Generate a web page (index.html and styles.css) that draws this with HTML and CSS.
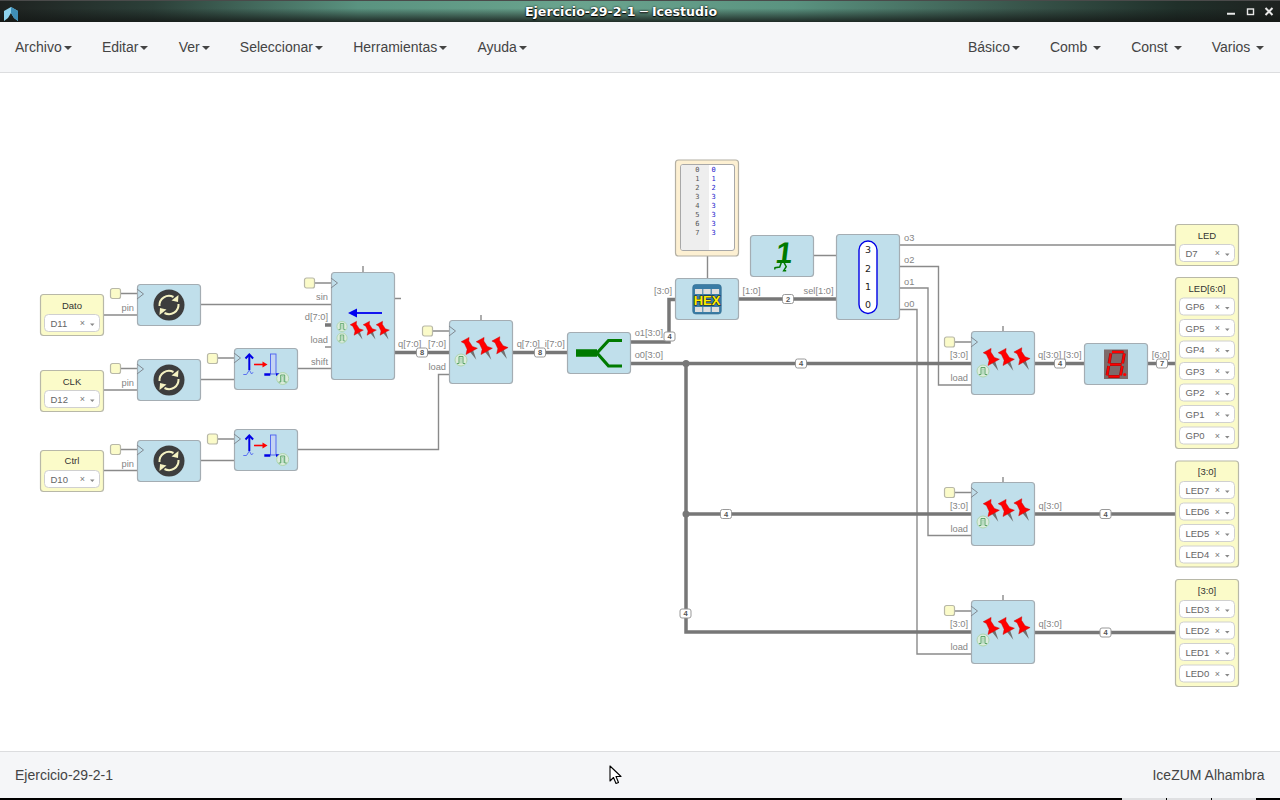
FILE: index.html
```html
<!DOCTYPE html>
<html lang="es">
<head>
<meta charset="utf-8">
<title>Ejercicio-29-2-1 — Icestudio</title>
<link rel="stylesheet" href="styles.css">
</head>
<body>
<div class="app">
  <header class="titlebar">
    <svg class="logo" width="16" height="15" viewBox="0 0 16 15"><path class="logo-a" d="M1 4 8 0l7 4v10l-4-3-3-5-3 5-4 3z"/><path class="logo-b" d="M8 0l7 4v10l-4-3-3-5z"/></svg>
    <div class="title">Ejercicio-29-2-1 ─ Icestudio</div>
    <svg class="winctl" width="48" height="14" viewBox="0 0 48 14"><path class="ctl" d="M1 8.750h8"/><rect class="ctl-thin" x="21.500" y="4" width="6" height="5.500"/><path class="ctl" d="M39.500 3l7 7M46.500 3l-7 7"/></svg>
  </header>
  <nav class="navbar">
    <ul class="menu">
      <li>Archivo<span class="caret"></span></li>
      <li>Editar<span class="caret"></span></li>
      <li>Ver<span class="caret"></span></li>
      <li>Seleccionar<span class="caret"></span></li>
      <li>Herramientas<span class="caret"></span></li>
      <li>Ayuda<span class="caret"></span></li>
    </ul>
    <ul class="menu menu-right">
      <li>Básico<span class="caret"></span></li>
      <li>Comb <span class="caret"></span></li>
      <li>Const <span class="caret"></span></li>
      <li>Varios <span class="caret"></span></li>
    </ul>
  </nav>
  <main class="canvas">
    <svg class="diagram" width="1280" height="678" viewBox="0 73 1280 678">
      <defs>
        <g id="sel">
          <rect class="sel-box" x="0" y="0" width="55" height="17" rx="4"/>
          <text class="sel-x" x="38" y="11.500">×</text>
          <path class="sel-arrow" d="M45.500 9h4.500l-2.200 2.600z"/>
        </g>
        <g id="yel"><rect class="const" x=".5" y=".5" width="10" height="10" rx="2"/></g>
        <path id="tri" class="tri" d="M0 0l6.500 5L0 10"/>
        <g id="pin">
          <path class="needle" d="M0 0-1.800-10h3.600z"/>
          <path class="pinhead" d="M-6.500-9.500H6.500L3-13.500l-.5-6.500 2-3h-9l2 3-.5 6.500z"/>
        </g>
        <g id="pulse">
          <circle class="pulse-bg" r="6"/>
          <path class="pulse-line" d="M-4 3.500h2v-7h4v7h2"/>
          <path class="pulse-inner" d="M-.8 3.500v-5.500h1.600v5.500"/>
        </g>
        <g id="regicons">
          <use href="#pin" transform="translate(27.300 39.700) rotate(-29)"/>
          <use href="#pin" transform="translate(42.300 39.700) rotate(-29)"/>
          <use href="#pin" transform="translate(58 39) rotate(-29)"/>
          <use href="#pulse" x="12" y="40"/>
        </g>
        <g id="sync">
          <circle class="sync-bg" r="15.500"/>
          <path class="sync-arc" d="M-9.500 1A9.500 9.500 0 0 1 4.500 -8"/>
          <path class="sync-head" d="M9.500-10 9-3 2.500-4.500z"/>
          <path class="sync-arc" d="M9.500 -1A9.500 9.500 0 0 1 -4.500 8"/>
          <path class="sync-head" d="M-9.500 10-9 3-2.500 4.500z"/>
        </g>
        <g id="edge">
          <path class="edge-main" d="M15.300 7.500v15"/>
          <path class="edge-main" d="M11.500 11l3.800-4 3.800 4" />
          <path class="edge-thin" d="M9.300 27h3.200l2.800-4.500 2.300 4 1.500-1.800"/>
          <path class="edge-red" d="M20 17h10"/>
          <path class="edge-redhead" d="M33.500 17l-5-3v6z"/>
          <rect class="edge-step" x="36.500" y="6.500" width="5.500" height="20"/>
          <path class="edge-foot" d="M30.300 27h6M42 27h4"/>
          <use href="#pulse" x="48.700" y="31"/>
        </g>
        <g id="badge4"><rect class="badge" x="-5.500" y="-4.500" width="11" height="9" rx="2"/><text class="badge-t" y="2.700">4</text></g>
      </defs>

      <!-- wires -->
      <g class="wires">
        <path d="M104 315h33M104 390h33M104 470.500h33"/>
        <path d="M121 293.500h16M121 368.500h16M121 449.500h16"/>
        <path d="M218 358h16M218 439h16M315 283h16M433 331h16"/>
        <path d="M201 304.500h130M201 379.500h33M201 460.500h33"/>
        <path d="M298 368.500h33M298 449.500h140.500V374.500H449"/>
        <path d="M325 347h6M363 266v6M395 298.500h6M481 315v5"/>
        <path d="M707.500 256v22M814 255.500h22"/>
        <path d="M900 245h275"/>
        <path d="M900 266.500h38.500V385H971"/>
        <path d="M900 288h28V535.500H971"/>
        <path d="M900 309.500h17V654h54"/>
        <path d="M955 342h16M955 492.500h16M955 611h16"/>
        <path d="M1003 326v5M1003 477v5M1003 595v5"/>
      </g>
      <g class="buses">
        <path d="M325 325h6M395 352.500h54M513 352.500h54"/>
        <path d="M631 342h38V299.500h6M739 299h97"/>
        <path d="M631 363.500h340M686 363.500V632h285M686 514h285"/>
        <path d="M1035 363.500h49M1148 363.500h27M1035 514h140M1035 632.500h140"/>
      </g>
      <circle class="junction" cx="686" cy="363.500" r="3.500"/>
      <circle class="junction" cx="686" cy="514" r="3.500"/>

      <!-- input pins -->
      <rect class="pinblock" x="40.500" y="294.500" width="63" height="41" rx="3"/>
      <rect class="pinblock" x="40.500" y="370.500" width="63" height="41" rx="3"/>
      <rect class="pinblock" x="40.500" y="450.500" width="63" height="41" rx="3"/>
      <text class="ptitle" x="72" y="308.500">Dato</text>
      <text class="ptitle" x="72" y="384.500">CLK</text>
      <text class="ptitle" x="72" y="464">Ctrl</text>
      <use href="#sel" x="44.500" y="314.500"/><text class="sel-t" x="50.500" y="326.500">D11</text>
      <use href="#sel" x="44.500" y="390.500"/><text class="sel-t" x="50.500" y="402.500">D12</text>
      <use href="#sel" x="44.500" y="470.500"/><text class="sel-t" x="50.500" y="482.500">D10</text>

      <!-- constants -->
      <use href="#yel" x="110" y="288"/>
      <use href="#yel" x="110" y="363"/>
      <use href="#yel" x="110" y="444"/>
      <use href="#yel" x="207" y="353"/>
      <use href="#yel" x="207" y="433.500"/>
      <use href="#yel" x="304" y="277.500"/>
      <use href="#yel" x="422" y="325.500"/>
      <use href="#yel" x="944" y="336.500"/>
      <use href="#yel" x="944" y="487"/>
      <use href="#yel" x="944" y="605"/>

      <!-- sync blocks -->
      <rect class="block" x="137.500" y="284.500" width="63" height="41" rx="3"/>
      <rect class="block" x="137.500" y="359.500" width="63" height="41" rx="3"/>
      <rect class="block" x="137.500" y="440.500" width="63" height="41" rx="3"/>
      <use href="#tri" x="137" y="289"/><use href="#tri" x="137" y="364"/><use href="#tri" x="137" y="445"/>
      <use href="#sync" x="169" y="305"/><use href="#sync" x="169" y="380"/><use href="#sync" x="169" y="461"/>

      <!-- edge detectors -->
      <rect class="block" x="234.500" y="348.500" width="63" height="41" rx="3"/>
      <rect class="block" x="234.500" y="429.500" width="63" height="41" rx="3"/>
      <use href="#tri" x="234" y="353"/><use href="#tri" x="234" y="434"/>
      <use href="#edge" x="234" y="347.500"/><use href="#edge" x="234" y="428.500"/>

      <!-- shift register -->
      <rect class="block" x="331.500" y="272.500" width="63" height="107" rx="3"/>
      <use href="#tri" x="331" y="278"/>
      <path class="arrow-line" d="M354 313h28"/><path class="arrow-head" d="M348 313l9-4.500v9z"/>
      <use href="#pulse" transform="translate(342 326.500) scale(.85)"/>
      <use href="#pulse" transform="translate(342 338) scale(.85)"/>
      <use href="#pin" transform="translate(362.500 339.500) rotate(-29) scale(.82)"/>
      <use href="#pin" transform="translate(375.500 339.500) rotate(-29) scale(.82)"/>
      <use href="#pin" transform="translate(388.500 339.500) rotate(-29) scale(.82)"/>

      <!-- register 2 -->
      <rect class="block" x="449.500" y="320.500" width="63" height="63" rx="3"/>
      <use href="#tri" x="449" y="326"/>
      <use href="#regicons" x="449" y="320"/>

      <!-- splitter -->
      <rect class="block" x="567.500" y="332.500" width="63" height="41" rx="3"/>
      <path class="split-main" d="M576 353h21"/>
      <path class="split-branch" d="M597 353l11.500-12.500H622M597 353l11.500 13H622"/>

      <!-- ROM -->
      <rect class="rom" x="675.500" y="160" width="63" height="96" rx="3"/>
      <rect class="rom-in" x="680.500" y="164.500" width="54" height="86" rx="2.500"/>
      <path class="rom-gutter" d="M683 165h26v85h-26a2 2 0 0 1-2-2V167a2 2 0 0 1 2-2z"/>
      <text class="rom-n" x="697.300" y="172">0</text><text class="rom-v" x="713.700" y="172">0</text>
      <text class="rom-n" x="697.300" y="181">1</text><text class="rom-v" x="713.700" y="181">1</text>
      <text class="rom-n" x="697.300" y="190">2</text><text class="rom-v" x="713.700" y="190">2</text>
      <text class="rom-n" x="697.300" y="199">3</text><text class="rom-v" x="713.700" y="199">3</text>
      <text class="rom-n" x="697.300" y="208">4</text><text class="rom-v" x="713.700" y="208">3</text>
      <text class="rom-n" x="697.300" y="217">5</text><text class="rom-v" x="713.700" y="217">3</text>
      <text class="rom-n" x="697.300" y="226">6</text><text class="rom-v" x="713.700" y="226">3</text>
      <text class="rom-n" x="697.300" y="235">7</text><text class="rom-v" x="713.700" y="235">3</text>

      <!-- HEX -->
      <rect class="block" x="675.500" y="278.500" width="63" height="41" rx="3"/>
      <rect class="hex-bg" x="692.700" y="284.500" width="28.600" height="29.500" rx="3"/>
      <rect class="hex-cell" x="695" y="289" width="7.300" height="5"/><rect class="hex-cell" x="703.300" y="289" width="7.300" height="5"/><rect class="hex-cell" x="711.800" y="289" width="7.300" height="5"/>
      <rect class="hex-cell" x="695" y="307" width="7.300" height="5"/><rect class="hex-cell" x="703.300" y="307" width="7.300" height="5"/><rect class="hex-cell" x="711.800" y="307" width="7.300" height="5"/>
      <text class="hex-t" x="707" y="305">HEX</text>

      <!-- constant 1 -->
      <rect class="block" x="750.500" y="235.500" width="63" height="41" rx="3"/>
      <text class="one" transform="translate(783 263) skewX(-7)">1</text>
      <path class="legs" d="M781.700 261.500l-2 5.500-4.700.7-.300 1.800M783.500 261.500l2.700 5.200-2.500 4h2.500"/>

      <!-- decoder -->
      <rect class="block" x="836.500" y="234.500" width="63" height="85" rx="3"/>
      <rect class="oval" x="859" y="241" width="18" height="72.500" rx="9"/>
      <text class="dec" x="868" y="252.500">3</text>
      <text class="dec" x="868" y="271.500">2</text>
      <text class="dec" x="868" y="289.500">1</text>
      <text class="dec" x="868" y="308">0</text>

      <!-- registers -->
      <rect class="block" x="971.500" y="331.500" width="63" height="63" rx="3"/>
      <rect class="block" x="971.500" y="482.500" width="63" height="63" rx="3"/>
      <rect class="block" x="971.500" y="600.500" width="63" height="63" rx="3"/>
      <use href="#tri" x="971" y="337"/><use href="#tri" x="971" y="487.500"/><use href="#tri" x="971" y="606"/>
      <use href="#regicons" x="971" y="331"/>
      <use href="#regicons" x="971" y="482"/>
      <use href="#regicons" x="971" y="600"/>

      <!-- 7 segment -->
      <rect class="block" x="1084.500" y="343.500" width="63" height="41" rx="3"/>
      <rect class="seg-bg" x="1104" y="349.500" width="24" height="29.500"/>
      <path class="seg-o" d="M1112 352h11.500M1110.800 353.500l-1.700 9.800M1124.300 353.500l-1.700 9.800M1110 364.500h11.500M1108.700 366l-1.600 9.300M1122.200 366l-1.600 9.300M1108.500 376.500h11"/>
      <path class="seg-i" d="M1112 352h11.500M1110.800 353.500l-1.700 9.800M1124.300 353.500l-1.700 9.800M1110 364.500h11.500M1108.700 366l-1.600 9.300M1122.200 366l-1.600 9.300M1108.500 376.500h11"/>
      <circle class="seg-dot" cx="1124.700" cy="374.500" r="1.600"/>

      <!-- outputs -->
      <rect class="pinblock" x="1175.500" y="224.500" width="63" height="41" rx="3"/>
      <rect class="pinblock" x="1175.500" y="277.500" width="63" height="171" rx="3"/>
      <rect class="pinblock" x="1175.500" y="461" width="63" height="106" rx="3"/>
      <rect class="pinblock" x="1175.500" y="579.500" width="63" height="107" rx="3"/>
      <text class="ptitle" x="1207" y="238.500">LED</text>
      <text class="ptitle" x="1207" y="291.500">LED[6:0]</text>
      <text class="ptitle" x="1207" y="474.500">[3:0]</text>
      <text class="ptitle" x="1207" y="593.500">[3:0]</text>
      <use href="#sel" x="1179.500" y="244.500"/><text class="sel-t" x="1185.500" y="256.500">D7</text>
      <use href="#sel" x="1179.500" y="298"/><text class="sel-t" x="1185.500" y="310">GP6</text>
      <use href="#sel" x="1179.500" y="319.500"/><text class="sel-t" x="1185.500" y="331.500">GP5</text>
      <use href="#sel" x="1179.500" y="341"/><text class="sel-t" x="1185.500" y="353">GP4</text>
      <use href="#sel" x="1179.500" y="362.500"/><text class="sel-t" x="1185.500" y="374.500">GP3</text>
      <use href="#sel" x="1179.500" y="384"/><text class="sel-t" x="1185.500" y="396">GP2</text>
      <use href="#sel" x="1179.500" y="405.500"/><text class="sel-t" x="1185.500" y="417.500">GP1</text>
      <use href="#sel" x="1179.500" y="427"/><text class="sel-t" x="1185.500" y="439">GP0</text>
      <use href="#sel" x="1179.500" y="481.500"/><text class="sel-t" x="1185.500" y="493.500">LED7</text>
      <use href="#sel" x="1179.500" y="503"/><text class="sel-t" x="1185.500" y="515">LED6</text>
      <use href="#sel" x="1179.500" y="524.500"/><text class="sel-t" x="1185.500" y="536.500">LED5</text>
      <use href="#sel" x="1179.500" y="546"/><text class="sel-t" x="1185.500" y="558">LED4</text>
      <use href="#sel" x="1179.500" y="600.500"/><text class="sel-t" x="1185.500" y="612.500">LED3</text>
      <use href="#sel" x="1179.500" y="622"/><text class="sel-t" x="1185.500" y="634">LED2</text>
      <use href="#sel" x="1179.500" y="643.500"/><text class="sel-t" x="1185.500" y="655.500">LED1</text>
      <use href="#sel" x="1179.500" y="665"/><text class="sel-t" x="1185.500" y="677">LED0</text>

      <!-- port labels -->
      <g class="lbl-r">
        <text x="134" y="311">pin</text><text x="134" y="386">pin</text><text x="134" y="467">pin</text>
        <text x="328" y="300">sin</text><text x="328" y="320">d[7:0]</text><text x="328" y="343">load</text><text x="328" y="365">shift</text>
        <text x="446" y="370">load</text>
        <text x="833.500" y="293.500">sel[1:0]</text>
        <text x="968" y="357.500">[3:0]</text><text x="968" y="381">load</text>
        <text x="968" y="508.500">[3:0]</text><text x="968" y="532">load</text>
        <text x="968" y="626.500">[3:0]</text><text x="968" y="650">load</text>
      </g>
      <g class="lbl">
        <text x="398" y="347">q[7:0]</text><text x="428" y="347">[7:0]</text>
        <text x="516.700" y="347">q[7:0]</text><text x="544.700" y="347">i[7:0]</text>
        <text x="634.700" y="336">o1[3:0]</text><text x="634.700" y="358">o0[3:0]</text>
        <text x="654" y="293.500">[3:0]</text><text x="742.500" y="293.500">[1:0]</text>
        <text x="904" y="241">o3</text><text x="904" y="262.500">o2</text><text x="904" y="284.500">o1</text><text x="904" y="306.500">o0</text>
        <text x="1038" y="357.500">q[3:0]</text><text x="1063.500" y="357.500">[3:0]</text><text x="1151.700" y="357.500">[6:0]</text>
        <text x="1038.500" y="508.500">q[3:0]</text><text x="1038.500" y="626.500">q[3:0]</text>
      </g>

      <!-- bus size badges -->
      <rect class="badge" x="416.500" y="348" width="11" height="9" rx="2"/><text class="badge-t" x="422" y="355">8</text>
      <rect class="badge" x="534.500" y="348" width="11" height="9" rx="2"/><text class="badge-t" x="540" y="355">8</text>
      <rect class="badge" x="782.500" y="294.500" width="11" height="9" rx="2"/><text class="badge-t" x="788" y="301.500">2</text>
      <rect class="badge" x="1156.500" y="359" width="11" height="9" rx="2"/><text class="badge-t" x="1162" y="366">7</text>
      <use href="#badge4" x="669.500" y="336.500"/>
      <use href="#badge4" x="801" y="363.500"/>
      <use href="#badge4" x="726" y="514"/>
      <use href="#badge4" x="685.500" y="613.500"/>
      <use href="#badge4" x="1060" y="363.500"/>
      <use href="#badge4" x="1105.500" y="514"/>
      <use href="#badge4" x="1105.500" y="632.500"/>
    </svg>
  </main>
  <footer class="statusbar">
    <span>Ejercicio-29-2-1</span>
    <span>IceZUM Alhambra</span>
    <svg class="cursor" width="14" height="21" viewBox="0 0 14 21"><path class="cursor-p" d="M1 1v15l3.500-3.500 2.500 6 2.500-1-2.500-6h5z"/></svg>
  </footer>
  <div class="screen-edge"><i></i><i></i><i></i></div>
</div>
</body>
</html>
```
FILE: styles.css
```css
* { box-sizing: border-box; }
html, body { margin: 0; padding: 0; height: 100%; overflow: hidden; background: #fff; }
.app { display: flex; flex-direction: column; height: 800px; width: 1280px; font-family: "Liberation Sans", Arial, sans-serif; position: relative; }

.titlebar {
  height: 22px; flex: none; display: flex; align-items: center; position: relative;
  padding: 0 6px 0 3px;
  border-top: 1px solid #4a4a4a;
  background:
    linear-gradient(180deg, rgba(0,0,0,0) 0%, rgba(0,0,0,0) 35%, rgba(20,24,22,.85) 100%),
    linear-gradient(90deg, #1e2220 0%, #2c4039 12%, #5a9380 28%, #6aa48e 45%, #5a9380 62%, #38544a 80%, #20302a 92%, #1e2220 100%);
}
.logo { flex: none; margin-top: 6px; }
.logo-a { fill: #8fd3ee; }
.logo-b { fill: #3f8fb8; }
.title { flex: 1; text-align: center; color: #fff; font: bold 12.6px "DejaVu Sans", sans-serif; text-shadow: 0 0 2px #000, 0 1px 1px #000; white-space: nowrap; padding-right: 3px; }
.winctl { flex: none; }
.ctl { fill: none; stroke: #e8e8e8; stroke-width: 2; }
.ctl-thin { fill: none; stroke: #e8e8e8; stroke-width: 1.4; }

.navbar { height: 51px; flex: none; display: flex; justify-content: space-between; align-items: center; padding: 0 15px; background: #f5f6f8; border-bottom: 1px solid #dcdddf; }
.menu { display: flex; gap: 30.2px; list-style: none; margin: 0; padding: 0; font-size: 14px; color: #444; white-space: pre; }
.menu-right { gap: 30px; margin-right: 0.8px; }
.caret { display: inline-block; width: 0; height: 0; margin-left: 2px; vertical-align: middle; border-top: 4px solid #444; border-left: 4px solid transparent; border-right: 4px solid transparent; }

.canvas { flex: 1; min-height: 0; background: #fff; }
.diagram { display: block; }

.statusbar { height: 47px; flex: none; position: relative; display: flex; justify-content: space-between; align-items: center; padding: 0 15.5px 0 15px; background: #f5f6f8; border-top: 1px solid #dcdddf; font-size: 14px; color: #444; }
.cursor { position: absolute; left: 609px; top: 13px; }
.cursor-p { fill: #fff; stroke: #000; stroke-width: 1.1; stroke-linejoin: round; }
.screen-edge { height: 2px; flex: none; background: #000; display: flex; justify-content: flex-end; padding-right: 24px; }
.screen-edge i { width: 45px; background: #dfe0e2; border-left: 1px solid #000; }

/* diagram */
.wires path { fill: none; stroke: #8a8a8a; stroke-width: 1.4; }
.buses path { fill: none; stroke: #777; stroke-width: 3.5; }
.junction { fill: #777; }
.block { fill: #c0dfeb; stroke: #a4adb3; stroke-width: 1.2; }
.pinblock { fill: #fbfbc9; stroke: #b8b8a8; stroke-width: 1.2; }
.const { fill: #fbfbc9; stroke: #b8b8a8; stroke-width: 1.2; }
.tri { fill: none; stroke: #808890; stroke-width: 1; }
.sel-box { fill: #fff; stroke: #d0d0d0; stroke-width: 1; }
.sel-x { font: 9px "Liberation Sans", sans-serif; fill: #777; text-anchor: middle; }
.sel-arrow { fill: #888; }
.sel-t { font: 9.500px "Liberation Sans", sans-serif; fill: #666; }
.ptitle { font: 9.500px "Liberation Sans", sans-serif; fill: #333; text-anchor: middle; }
.lbl text, .lbl-r text { font: 9.300px "Liberation Sans", sans-serif; fill: #858585; }
.lbl-r text { text-anchor: end; }
.badge { fill: #fff; stroke: #999; stroke-width: 1; }
.badge-t { font: bold 7.500px "Liberation Sans", sans-serif; fill: #555; text-anchor: middle; }

.needle { fill: #707070; }
.pinhead { fill: #f00; stroke: #c80000; stroke-width: .4; }
.pulse-bg { fill: #dcecdc; stroke: #aed6ae; stroke-width: 1; }
.pulse-line { fill: none; stroke: #4f9e5f; stroke-width: .9; }
.pulse-inner { fill: none; stroke: #8cc49a; stroke-width: .6; }
.sync-bg { fill: #3d3d3d; }
.sync-arc { fill: none; stroke: #f5f2c2; stroke-width: 2; }
.sync-head { fill: #f5f2c2; }
.edge-main { fill: none; stroke: #0000e6; stroke-width: 2; }
.edge-thin { fill: none; stroke: #5a70f0; stroke-width: 1; }
.edge-red { fill: none; stroke: #f00; stroke-width: 1.600; }
.edge-redhead { fill: #f00; }
.edge-step { fill: #c4d4f2; stroke: #4a60f0; stroke-width: .9; }
.edge-foot { fill: none; stroke: #0000e6; stroke-width: 2.600; }
.arrow-line { fill: none; stroke: #0000f0; stroke-width: 1.800; }
.arrow-head { fill: #0000f0; }
.split-main { fill: none; stroke: #007a00; stroke-width: 7.500; }
.split-branch { fill: none; stroke: #007a00; stroke-width: 3.200; }
.rom { fill: #fdf0d2; stroke: #b4b0a4; stroke-width: 1.200; }
.rom-in { fill: #fff; stroke: #a8a8a8; stroke-width: 1; }
.rom-gutter { fill: #eeeeee; }
.rom-n, .rom-v { font: 7px "DejaVu Sans Mono", monospace; text-anchor: middle; }
.rom-n { fill: #555; }
.rom-v { fill: #2222cc; }
.hex-bg { fill: #3a7ca5; stroke: #2f6a8f; stroke-width: .6; }
.hex-cell { fill: #dedede; }
.hex-t { font: bold 13px "Liberation Sans", sans-serif; fill: #ffee00; stroke: #111; stroke-width: 1; paint-order: stroke; text-anchor: middle; }
.one { font: bold 30px "Liberation Sans", sans-serif; fill: #007a00; text-anchor: middle; }
.legs { fill: none; stroke: #007a00; stroke-width: 1.500; }
.oval { fill: #fff; stroke: #0000e6; stroke-width: 1.400; }
.dec { font: 9.500px "DejaVu Sans", sans-serif; fill: #222; text-anchor: middle; }
.seg-bg { fill: #7d6a6a; }
.seg-o { fill: none; stroke: #8a1010; stroke-width: 3; }
.seg-i { fill: none; stroke: #f00; stroke-width: 2; }
.seg-dot { fill: #f00; }
```
